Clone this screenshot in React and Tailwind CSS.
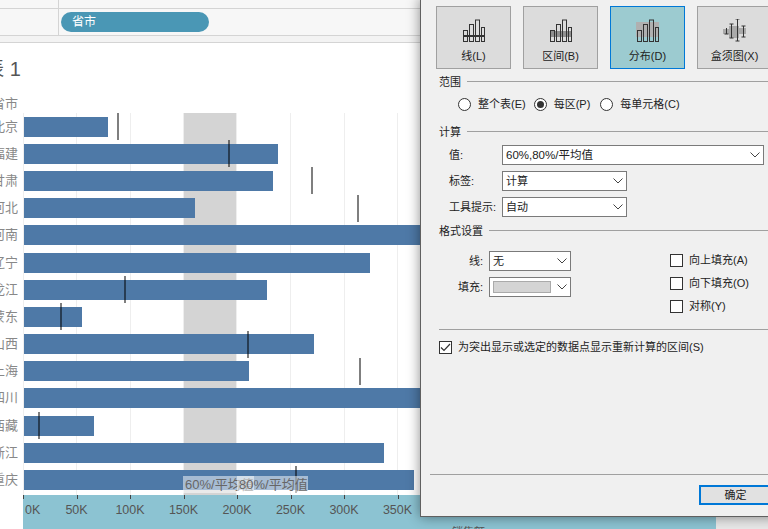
import React from "react";

const rows = [
  ["北京", 84, 94],
  ["福建", 254, 205],
  ["甘肃", 249, 288],
  ["河北", 171, 334],
  ["河南", 420, null],
  ["辽宁", 346, null],
  ["黑龙江", 243, 101],
  ["蒙东", 58, 37],
  ["山西", 290, 224],
  ["上海", 225, 336],
  ["四川", 420, null],
  ["西藏", 70, 15],
  ["浙江", 360, null],
  ["重庆", 390, 272],
];
const grid = [53, 107, 160, 213, 267, 321, 374];
const ticks = ["50K", "100K", "150K", "200K", "250K", "300K", "350K"];

function BarsIcon({ variant }) {
  return (
    <svg width="24" height="24" viewBox="0 0 24 24" fill="none">
      {variant === "band" && <rect x="1" y="12" width="22" height="6" fill="#8f8f8f" />}
      {variant === "dist" && <rect x="0" y="3" width="23" height="15" fill="#b0b0b0" />}
      <g stroke="#333" strokeWidth="1">
        <rect x="1.5" y="11.5" width="4" height="11" />
        <rect x="7.5" y="5.5" width="4" height="17" />
        <rect x="13.5" y="1" width="4" height="21.5" />
        <rect x="19.5" y="8.5" width="3" height="14" />
      </g>
      {variant === "line" && <rect x="1" y="16" width="22" height="2" fill="#333" />}
    </svg>
  );
}

function BoxIcon() {
  return (
    <svg width="24" height="24" viewBox="0 0 24 24" fill="none">
      <rect x="0" y="10" width="8" height="5" fill="#aaa" />
      <rect x="6" y="7" width="10" height="12" fill="#aaa" />
      <rect x="15" y="9" width="8" height="6" fill="#aaa" />
      <g stroke="#333" strokeWidth="1">
        <path d="M3.5 9v6M1.5 15h4M1.5 9h0" />
        <path d="M8.5 5v14M6.5 5h4M6.5 19h4" />
        <path d="M14.5 0v22M12.5 0h4M12.5 22h4" />
        <path d="M20.5 7v11M18.5 7h4M18.5 18h4" />
      </g>
    </svg>
  );
}

function Chevron() {
  return (
    <svg width="10" height="6" viewBox="0 0 10 6" fill="none" className="shrink-0">
      <path d="M0.5 0.5L5 5L9.5 0.5" stroke="#444" strokeWidth="1" />
    </svg>
  );
}

function TypeButton({ label, selected, children }) {
  return (
    <div
      className={
        "w-[75px] h-[63px] shrink-0 flex flex-col items-center border " +
        (selected ? "bg-[#9ccbd0] border-[#0078d7]" : "bg-[#dcdcdc] border-[#a0a0a0]")
      }
    >
      <div className="mt-[12px] h-[24px]">{children}</div>
      <div className="mt-[5px] text-[11px] leading-[16px] text-[#222]">{label}</div>
    </div>
  );
}

function Group({ label }) {
  return (
    <div className="h-[16px] flex items-center gap-[6px] text-[11px] leading-[16px] text-[#222]">
      <span className="pt-px">{label}</span>
      <div className="flex-1 h-px bg-[#a0a0a0]" />
    </div>
  );
}

function Radio({ label, on, className }) {
  return (
    <div className={"flex items-center gap-[7px] " + (className || "")}>
      <div className="w-[13px] h-[13px] rounded-full border border-[#333] bg-white flex items-center justify-center">
        {on && <div className="w-[7px] h-[7px] rounded-full bg-[#333]" />}
      </div>
      <span className="text-[11px] leading-[16px] text-[#222]">{label}</span>
    </div>
  );
}

function Select({ width, children }) {
  return (
    <div
      className={
        "h-[20px] border border-[#7a7a7a] bg-white flex items-center justify-between pl-[3px] pr-[3px] text-[11px] leading-[16px] text-[#222] " +
        width
      }
    >
      <div className="flex-1 flex items-center">{children}</div>
      <Chevron />
    </div>
  );
}

function Check({ label, checked }) {
  return (
    <div className="flex items-center gap-[6px] h-[16px]">
      <div className="w-[13px] h-[13px] border border-[#333] bg-white flex items-center justify-center">
        {checked && (
          <svg width="11" height="9" viewBox="0 0 11 9" fill="none">
            <path d="M1 4.5L4 7.5L10 1" stroke="#333" strokeWidth="1.2" />
          </svg>
        )}
      </div>
      <span className="text-[11px] leading-[16px] text-[#222] whitespace-nowrap">{label}</span>
    </div>
  );
}

export default function App() {
  return (
    <div className="relative w-[768px] h-[529px] overflow-hidden bg-white font-['Liberation_Sans','Noto_Sans_CJK_SC',sans-serif]">
      {/* shelves */}
      <div className="h-[9px] flex bg-[#f7f7f7] border-b border-[#d4d4d4]">
        <div className="w-[59px] border-r border-[#d4d4d4]" />
      </div>
      <div className="h-[27px] flex bg-[#f7f7f7] border-b border-[#d4d4d4]">
        <div className="w-[59px] border-r border-[#d4d4d4]" />
        <div className="ml-[2px] mt-[3px] w-[148px] h-[20px] rounded-full bg-[#4a97b5] pl-[11px] text-[12px] leading-[20px] text-white">
          省市
        </div>
      </div>
      <div className="h-[7px] bg-[#f3f3f3] border-b border-[#d4d4d4]" />

      {/* title */}
      <div className="h-[31px] mt-[11px] w-[21px] flex justify-end overflow-hidden text-[20px] leading-[30px] text-[#555] whitespace-nowrap">
        工作表 1
      </div>
      {/* header */}
      <div className="mt-[10px] h-[18px] w-[18px] flex justify-end overflow-hidden text-[13px] leading-[18px] text-[#888] whitespace-nowrap">
        省市
      </div>

      {/* plot */}
      <div className="relative h-[382px]">
        <div className="absolute left-[23px] top-0 bottom-0 w-px bg-[#eeeeee]" />
        {grid.map((g) => (
          <div key={g} className="absolute top-0 bottom-0 w-px bg-[#eeeeee]" style={{ left: 23 + g }} />
        ))}
        <div className="absolute left-[184px] top-0 bottom-0 w-[52px] bg-[#d4d4d4]" />
        {rows.map(([name, w, ref]) => (
          <div key={name} className="relative h-[27.2px] flex items-center">
            <div className="w-[18px] flex justify-end overflow-hidden whitespace-nowrap text-[13px] leading-[16px] text-[#888]">
              {name}
            </div>
            <div className="ml-[6px] h-[20px] bg-[#4e79a7]" style={{ width: w }} />
            {ref !== null && (
              <div className="absolute top-0 h-[27px] w-[2px] bg-black/50" style={{ left: 23 + ref }} />
            )}
          </div>
        ))}
        <div className="absolute left-[183px] top-[363px] w-[71px] h-[17px] bg-white/50 pl-[2px] text-[13px] leading-[17px] text-[#666] overflow-hidden whitespace-nowrap">
          60%/平均值
        </div>
        <div className="absolute left-[237px] top-[363px] w-[71px] h-[17px] bg-white/50 pl-[2px] text-[13px] leading-[17px] text-[#666] overflow-hidden whitespace-nowrap">
          80%/平均值
        </div>
      </div>

      {/* axis */}
      <div className="ml-[23px] mr-[52px] h-[34px] bg-[#8cc3d2] overflow-hidden">
        <div className="flex h-[4px]">
          <div className="w-[53.5px] border-l border-[#444]" />
          {ticks.map((t) => (
            <div key={t} className="w-[53.5px] border-l border-[#444]" />
          ))}
        </div>
        <div className="flex mt-[3px] text-[12.5px] leading-[16px] text-[#555]">
          <div className="w-[26.75px] pl-[2px]">0K</div>
          {ticks.map((t) => (
            <div key={t} className="w-[53.5px] text-center">
              {t}
            </div>
          ))}
        </div>
        <div className="mt-[7px] ml-[429px] text-[11px] leading-[14px] text-[#555]">销售额</div>
      </div>

      {/* corner right of axis */}
      <div className="absolute left-[716px] right-0 top-[517px] bottom-0 bg-[#e8e8e8]" />

      {/* dialog */}
      <div className="absolute left-[420px] top-[-2px] w-[360px] h-[519px] bg-[#f0f0f0] border border-[#606060] shadow-[0_0_12px_rgba(0,0,0,0.45)] pl-[18px] pt-[7px]">
        <div className="flex gap-[12px] ml-[-3px]">
          <TypeButton label="线(L)">
            <BarsIcon variant="line" />
          </TypeButton>
          <TypeButton label="区间(B)">
            <BarsIcon variant="band" />
          </TypeButton>
          <TypeButton label="分布(D)" selected>
            <BarsIcon variant="dist" />
          </TypeButton>
          <TypeButton label="盒须图(X)">
            <BoxIcon />
          </TypeButton>
        </div>

        <div className="mt-[4px] w-[340px]">
          <Group label="范围" />
        </div>
        <div className="mt-[7px] ml-[19px] h-[16px] flex items-center">
          <Radio label="整个表(E)" />
          <Radio label="每区(P)" on className="ml-[8px]" />
          <Radio label="每单元格(C)" className="ml-[10px]" />
        </div>

        <div className="mt-[11px] w-[340px]">
          <Group label="计算" />
        </div>
        <div className="mt-[6px] flex items-center h-[20px] text-[11px] text-[#222]">
          <span className="w-[63px] pl-[10px]">值:</span>
          <Select width="w-[262px]">
            <span className="text-[11.5px]">60%,80%/平均值</span>
          </Select>
        </div>
        <div className="mt-[6px] flex items-center h-[20px] text-[11px] text-[#222]">
          <span className="w-[63px] pl-[10px]">标签:</span>
          <Select width="w-[125px]">计算</Select>
        </div>
        <div className="mt-[6px] flex items-center h-[20px] text-[11px] text-[#222]">
          <span className="w-[63px] pl-[10px] whitespace-nowrap">工具提示:</span>
          <Select width="w-[125px]">自动</Select>
        </div>

        <div className="mt-[5px] w-[340px]">
          <Group label="格式设置" />
        </div>

        <div className="mt-[13px] flex">
          <div className="w-[132px]">
            <div className="flex items-center h-[20px]">
              <span className="w-[50px] pr-[6px] text-right text-[11px] text-[#222]">线:</span>
              <Select width="w-[82px]">无</Select>
            </div>
            <div className="flex items-center h-[20px] mt-[6px]">
              <span className="w-[50px] pr-[6px] text-right text-[11px] text-[#222] whitespace-nowrap">填充:</span>
              <Select width="w-[82px]">
                <div className="w-[58px] h-[12px] bg-[#d4d4d4] border border-[#aaa]" />
              </Select>
            </div>
          </div>
          <div className="ml-[99px] flex flex-col gap-[7px] mt-[1px]">
            <Check label="向上填充(A)" />
            <Check label="向下填充(O)" />
            <Check label="对称(Y)" />
          </div>
        </div>

        <div className="mt-[15px] h-px bg-[#a0a0a0] w-[340px]" />
        <div className="mt-[9px]">
          <Check label="为突出显示或选定的数据点显示重新计算的区间(S)" checked />
        </div>

        <div className="mt-[119px] ml-[-9px] h-px bg-[#a0a0a0] w-[350px]" />
        <div className="mt-[10px] ml-[260px] w-[73px] h-[20px] border-2 border-[#0078d7] bg-[#e1e1e1] flex items-center justify-center text-[11px] text-[#222]">
          确定
        </div>
      </div>
    </div>
  );
}
